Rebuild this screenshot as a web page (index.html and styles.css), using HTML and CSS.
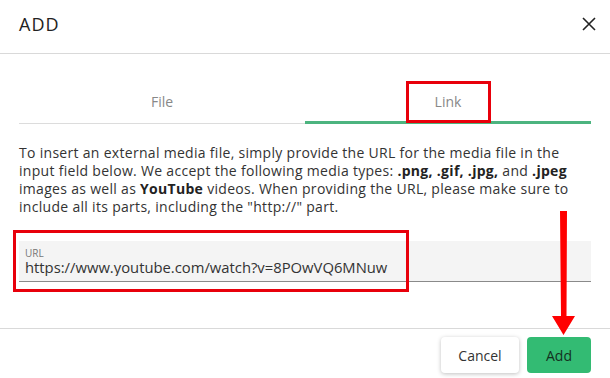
FILE: index.html
```html
<!DOCTYPE html>
<html lang="en">
<head>
  <meta charset="UTF-8" />
  <title>Add media</title>
  <link rel="stylesheet" href="styles.css">
</head>
<body>
  <div class="modal">
    <div class="header">
      <h1>ADD</h1>
      <button class="close" aria-label="Close">
        <svg width="16" height="16" viewBox="0 0 16 16"><path d="M2 2L14 14M14 2L2 14" stroke="#222" stroke-width="1.6" fill="none"/></svg>
      </button>
    </div>

    <div class="tabs">
      <div class="tab">File</div>
      <div class="tab active">Link</div>
    </div>

    <p class="desc">
      To insert an external media file, simply provide the URL for the media file in the<br>
      input field below. We accept the following media types: <b>.png, .gif, .jpg,</b> and <b>.jpeg</b><br>
      images as well as <b>YouTube</b> videos. When providing the URL, please make sure to<br>
      include all its parts, including the "http://" part.
    </p>

    <div class="field">
      <label for="url">URL</label>
      <input type="text" id="url" value="https://www.youtube.com/watch?v=8POwVQ6MNuw" />
    </div>

    <div class="footer">
      <button class="btn cancel">Cancel</button>
      <button class="btn add">Add</button>
    </div>

    <div class="mark mark-tab"></div>
    <div class="mark mark-input"></div>
    <svg class="arrow" width="30" height="126" viewBox="0 0 30 126">
      <path d="M11 0H18L17.5 105H26L14.5 124L3 105H12Z" fill="#f00"/>
    </svg>
  </div>
</body>
</html>
```

FILE: styles.css
```css
body {
  margin: 0;
  background-color: #fff;
  font-family: "Open Sans", sans-serif;
  color: #333;
}

.modal {
  position: relative;
  width: 610px;
  height: 378px;
}

.header {
  display: flex;
  justify-content: space-between;
  align-items: center;
  height: 54px;
  padding: 0 19px 6px;
  border-bottom: 1px solid #d9d9d9;
  box-sizing: border-box;
}

.header h1 {
  margin: 0;
  font-size: 18px;
  font-weight: 400;
  letter-spacing: 1px;
  color: #222;
}

.close {
  background: none;
  border: none;
  padding: 0;
  margin-right: -6px;
  display: flex;
  cursor: pointer;
}

.tabs {
  display: flex;
  margin: 32px 19px 0;
}

.tab {
  flex: 1;
  text-align: center;
  font-size: 14px;
  color: #888;
  height: 38px;
  line-height: 32px;
  border-bottom: 1px solid #dcdcdc;
  box-sizing: border-box;
}

.tab.active {
  border-bottom: 3px solid #4cb47f;
}

.desc {
  margin: 20px 19px 0;
  font-size: 14px;
  letter-spacing: 0.3px;
  line-height: 18px;
  color: #333;
  white-space: nowrap;
}

.desc b {
  color: #222;
}

.field {
  margin: 25px 19px 0;
  background-color: #f4f4f4;
  border-bottom: 1px solid #8a8a8a;
  padding: 6px 6px 5px;
}

.field label {
  display: block;
  font-size: 10px;
  color: #777;
  line-height: 12px;
}

.field input {
  display: block;
  width: 100%;
  border: none;
  background: transparent;
  padding: 0;
  font-family: "Open Sans", sans-serif;
  font-size: 14.8px;
  color: #333;
  line-height: 17px;
  height: 17px;
  outline: none;
}

.footer {
  display: flex;
  justify-content: flex-end;
  gap: 8px;
  margin-top: 46px;
  padding: 8px 19px 0;
  border-top: 1px solid #d9d9d9;
}

.btn {
  height: 36px;
  border: none;
  border-radius: 4px;
  font-family: "Open Sans", sans-serif;
  font-size: 14px;
  cursor: pointer;
}

.cancel {
  width: 78px;
  background-color: #fff;
  color: #333;
  box-shadow: 0 1px 4px rgba(0, 0, 0, 0.25);
}

.add {
  width: 64px;
  background-color: #33bb73;
  color: #14301f;
}

.mark {
  position: absolute;
  border: 3px solid #e8000b;
  box-sizing: border-box;
}

.mark-tab {
  left: 406px;
  top: 81px;
  width: 85px;
  height: 42px;
}

.mark-input {
  left: 13px;
  top: 230px;
  width: 396px;
  height: 62px;
}

.arrow {
  position: absolute;
  left: 549px;
  top: 211px;
}
```
